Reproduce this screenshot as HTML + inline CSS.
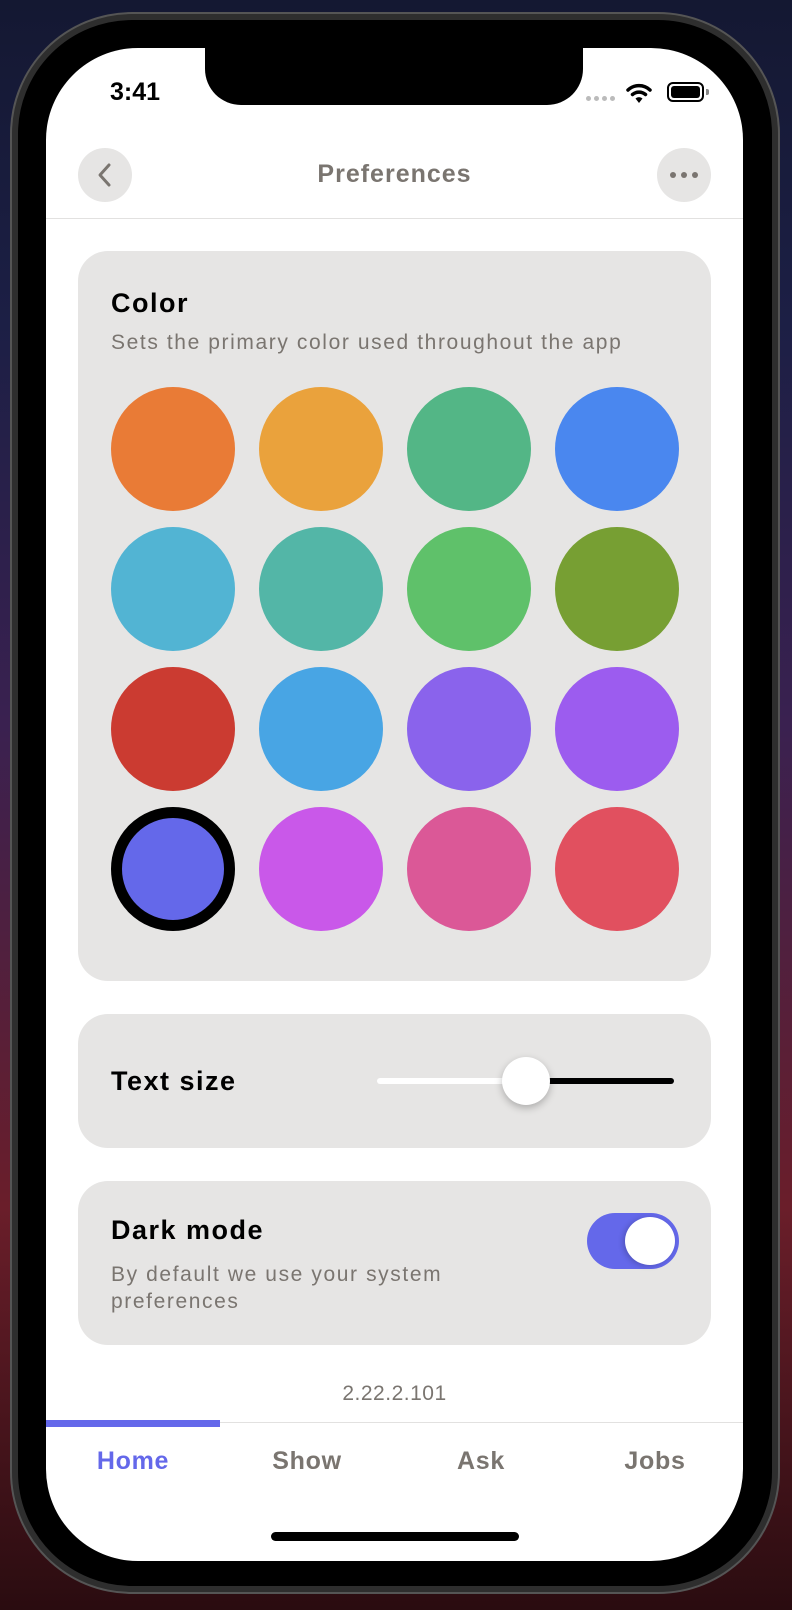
<!DOCTYPE html>
<html><head><meta charset="utf-8">
<style>
*{margin:0;padding:0;box-sizing:border-box}
html,body{width:792px;height:1610px;overflow:hidden}
body{background:linear-gradient(180deg,#141832 0%,#1c1f45 20%,#3a2150 45%,#6a1e2a 75%,#2a0c10 100%);font-family:"Liberation Sans",sans-serif;position:relative}
.frame{position:absolute;left:12px;top:14px;width:766px;height:1578px;border-radius:120px;background:#000;border:6px solid #2e2e2e;box-shadow:0 0 0 2px #555}
.screen{position:absolute;left:46px;top:48px;width:697px;height:1513px;border-radius:92px;background:#fff;overflow:hidden}
.notch{position:absolute;left:159px;top:-2px;width:378px;height:59px;background:#000;border-radius:0 0 36px 36px}
.abs{position:absolute}
.t{position:absolute;white-space:nowrap}
.card{position:absolute;left:32px;width:633px;background:#e6e5e4;border-radius:30px}
.c{position:absolute;width:124px;height:124px;border-radius:50%}
.h{font-size:27px;font-weight:bold;color:#000;letter-spacing:1.5px}
.s{font-size:21px;color:#7a7570;letter-spacing:1.6px}
.tab{font-size:25px;font-weight:bold;color:#7a7570;letter-spacing:0.7px}
</style></head><body>
<div class="frame"></div>
<div class="screen">
  <div class="notch"></div>
  <div class="t" style="left:64px;top:30px;font-size:25px;font-weight:bold;color:#000">3:41</div>
  <div class="abs" style="left:540px;top:48px;width:5px;height:5px;border-radius:50%;background:#bbb"></div>
  <div class="abs" style="left:548px;top:48px;width:5px;height:5px;border-radius:50%;background:#bbb"></div>
  <div class="abs" style="left:556px;top:48px;width:5px;height:5px;border-radius:50%;background:#bbb"></div>
  <div class="abs" style="left:564px;top:48px;width:5px;height:5px;border-radius:50%;background:#bbb"></div>
  <svg class="abs" style="left:580px;top:34px" width="26" height="22" viewBox="0 0 26 22"><path d="M2 8 A16 16 0 0 1 24 8" stroke="#000" stroke-width="3.5" fill="none" stroke-linecap="round"/><path d="M6.5 12.5 A10 10 0 0 1 19.5 12.5" stroke="#000" stroke-width="3.5" fill="none" stroke-linecap="round"/><path d="M13 21 L9.5 16.5 A5 5 0 0 1 16.5 16.5Z" fill="#000"/></svg>
  <div class="abs" style="left:621px;top:34px;width:37px;height:20px;border:2px solid #000;border-radius:6px;padding:2px"><div style="width:100%;height:100%;background:#000;border-radius:3px"></div></div>
  <div class="abs" style="left:660px;top:41px;width:3px;height:6px;background:#888;border-radius:0 2px 2px 0"></div>
  <div class="abs" style="left:32px;top:100px;width:54px;height:54px;border-radius:50%;background:#e6e5e4"></div>
  <svg class="abs" style="left:32px;top:100px" width="54" height="54" viewBox="0 0 54 54"><path d="M31 17 L22 27 L31 37" stroke="#7a7570" stroke-width="3" fill="none" stroke-linecap="round" stroke-linejoin="round"/></svg>
  <div class="abs" style="left:611px;top:100px;width:54px;height:54px;border-radius:50%;background:#e6e5e4"></div>
  <div class="abs" style="left:624px;top:124px;width:6px;height:6px;border-radius:50%;background:#7a7570"></div>
  <div class="abs" style="left:635px;top:124px;width:6px;height:6px;border-radius:50%;background:#7a7570"></div>
  <div class="abs" style="left:646px;top:124px;width:6px;height:6px;border-radius:50%;background:#7a7570"></div>
  <div class="t" style="left:0;width:697px;text-align:center;top:112px;font-size:25px;font-weight:bold;color:#7a7570;letter-spacing:1px">Preferences</div>
  <div class="abs" style="left:0;top:170px;width:697px;height:1px;background:#e2e1e0"></div>
  <div class="card" style="top:203px;height:730px">
    <div class="t h" style="left:33px;top:37px">Color</div>
    <div class="t s" style="left:33px;top:80px">Sets the primary color used throughout the app</div>
    <div class="c" style="left:33px;top:136px;background:#e97b36"></div>
    <div class="c" style="left:181px;top:136px;background:#eaa23c"></div>
    <div class="c" style="left:329px;top:136px;background:#53b686"></div>
    <div class="c" style="left:477px;top:136px;background:#4a87ef"></div>
    <div class="c" style="left:33px;top:276px;background:#52b4d3"></div>
    <div class="c" style="left:181px;top:276px;background:#53b6a7"></div>
    <div class="c" style="left:329px;top:276px;background:#5fc16a"></div>
    <div class="c" style="left:477px;top:276px;background:#779f33"></div>
    <div class="c" style="left:33px;top:416px;background:#cb3b31"></div>
    <div class="c" style="left:181px;top:416px;background:#48a5e4"></div>
    <div class="c" style="left:329px;top:416px;background:#8a63ec"></div>
    <div class="c" style="left:477px;top:416px;background:#9c5cef"></div>
    <div class="c" style="left:33px;top:556px;background:#6468ea;border:11px solid #000"></div>
    <div class="c" style="left:181px;top:556px;background:#c958e9"></div>
    <div class="c" style="left:329px;top:556px;background:#db5897"></div>
    <div class="c" style="left:477px;top:556px;background:#e1505f"></div>
  </div>
  <div class="card" style="top:966px;height:134px">
    <div class="t h" style="left:33px;top:52px">Text size</div>
    <div class="abs" style="left:299px;top:64px;width:150px;height:6px;background:#fff;border-radius:3px"></div>
    <div class="abs" style="left:449px;top:64px;width:147px;height:6px;background:#000;border-radius:3px"></div>
    <div class="abs" style="left:424px;top:43px;width:48px;height:48px;border-radius:50%;background:#fff;box-shadow:0 3px 8px rgba(0,0,0,.25)"></div>
  </div>
  <div class="card" style="top:1133px;height:164px">
    <div class="t h" style="left:33px;top:34px">Dark mode</div>
    <div class="t s" style="left:33px;top:80px;line-height:27px">By default we use your system<br>preferences</div>
    <div class="abs" style="left:509px;top:32px;width:92px;height:56px;border-radius:28px;background:#6468ea"></div>
    <div class="abs" style="left:547px;top:36px;width:50px;height:48px;border-radius:50%;background:#fff;box-shadow:-2px 1px 6px rgba(0,0,0,.2)"></div>
  </div>
  <div class="t" style="left:0;width:697px;text-align:center;top:1334px;font-size:21px;color:#7a7570;letter-spacing:0.5px">2.22.2.101</div>
  <div class="abs" style="left:0;top:1374px;width:697px;height:1px;background:#e2e1e0"></div>
  <div class="abs" style="left:0;top:1372px;width:174px;height:7px;background:#6468ea"></div>
  <div class="t tab" style="left:0;width:174px;text-align:center;top:1399px;color:#6468ea">Home</div>
  <div class="t tab" style="left:174px;width:174px;text-align:center;top:1399px">Show</div>
  <div class="t tab" style="left:348px;width:174px;text-align:center;top:1399px">Ask</div>
  <div class="t tab" style="left:522px;width:174px;text-align:center;top:1399px">Jobs</div>
  <div class="abs" style="left:225px;top:1484px;width:248px;height:9px;border-radius:5px;background:#000"></div>
</div>
</body></html>
